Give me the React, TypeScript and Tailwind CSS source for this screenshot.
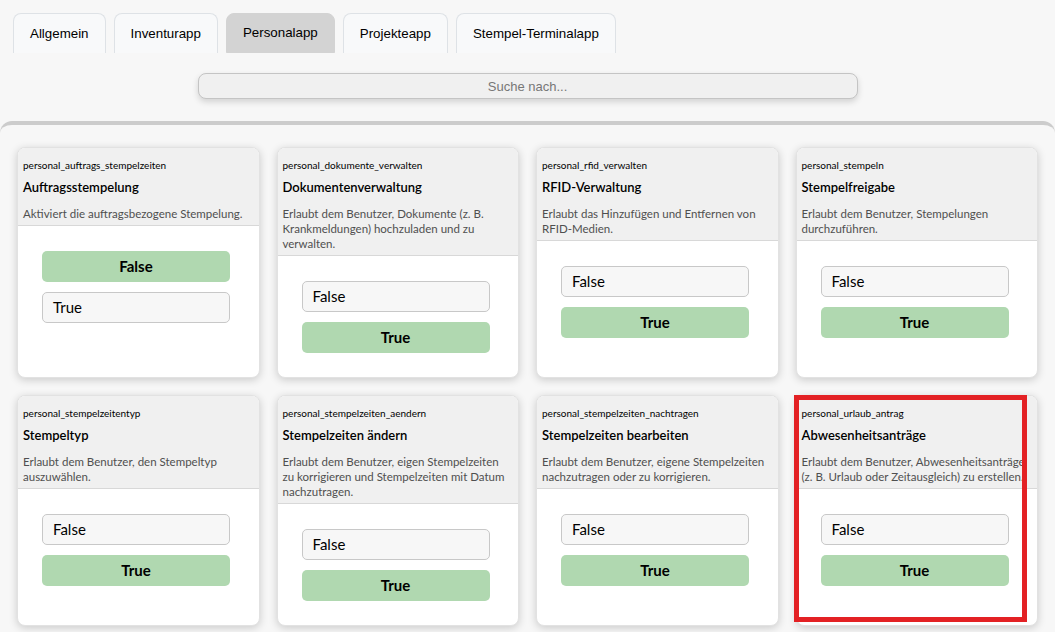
import React from 'react';

type Perm = {
  code: string;
  title: string;
  desc: string;
  value: boolean;
  marked?: boolean;
};

const tabs = ['Allgemein', 'Inventurapp', 'Personalapp', 'Projekteapp', 'Stempel-Terminalapp'];

const perms: Perm[] = [
  {
    code: 'personal_auftrags_stempelzeiten',
    title: 'Auftragsstempelung',
    desc: 'Aktiviert die auftragsbezogene Stempelung.',
    value: false,
  },
  {
    code: 'personal_dokumente_verwalten',
    title: 'Dokumentenverwaltung',
    desc: 'Erlaubt dem Benutzer, Dokumente (z. B. Krankmeldungen) hochzuladen und zu verwalten.',
    value: true,
  },
  {
    code: 'personal_rfid_verwalten',
    title: 'RFID-Verwaltung',
    desc: 'Erlaubt das Hinzufügen und Entfernen von RFID-Medien.',
    value: true,
  },
  {
    code: 'personal_stempeln',
    title: 'Stempelfreigabe',
    desc: 'Erlaubt dem Benutzer, Stempelungen durchzuführen.',
    value: true,
  },
  {
    code: 'personal_stempelzeitentyp',
    title: 'Stempeltyp',
    desc: 'Erlaubt dem Benutzer, den Stempeltyp auszuwählen.',
    value: true,
  },
  {
    code: 'personal_stempelzeiten_aendern',
    title: 'Stempelzeiten ändern',
    desc: 'Erlaubt dem Benutzer, eigen Stempelzeiten zu korrigieren und Stempelzeiten mit Datum nachzutragen.',
    value: true,
  },
  {
    code: 'personal_stempelzeiten_nachtragen',
    title: 'Stempelzeiten bearbeiten',
    desc: 'Erlaubt dem Benutzer, eigene Stempelzeiten nachzutragen oder zu korrigieren.',
    value: true,
  },
  {
    code: 'personal_urlaub_antrag',
    title: 'Abwesenheitsanträge',
    desc: 'Erlaubt dem Benutzer, Abwesenheitsanträge (z. B. Urlaub oder Zeitausgleich) zu erstellen.',
    value: true,
    marked: true,
  },
];

function OptionButton({ label, active }: { label: string; active: boolean }) {
  if (active) {
    return (
      <button className="h-[31px] w-[188px] rounded-[5px] bg-[#b0d8b0] text-center text-[15px] font-bold text-black">
        {label}
      </button>
    );
  }
  return (
    <button className="h-[31px] w-[188px] rounded-[5px] border border-[#c8c8c8] bg-[#f7f7f7] pl-[10px] text-left text-[15px] text-black">
      {label}
    </button>
  );
}

function PermCard({ perm }: { perm: Perm }) {
  return (
    <div className="relative">
      <div className="flex h-full flex-col overflow-hidden rounded-lg border border-[#e2e2e2] bg-white shadow-[0_2px_8px_rgba(0,0,0,0.18)]">
        <div className="border-b border-[#d8d8d8] bg-[#f0f0f0] px-[5px] pt-[10px] pb-[4px]">
          <div className="text-[10px] leading-[14px] text-black">{perm.code}</div>
          <div className="mt-[5px] text-[13px] font-semibold leading-[20px] text-black">{perm.title}</div>
          <div className="mt-[9px] text-[11.5px] leading-[15px] text-[#4f4f4f]">{perm.desc}</div>
        </div>
        <div className="flex flex-col gap-[10px] pt-[25px] pb-[24px] pl-[24px]">
          {['False', 'True'].map((o) => (
            <OptionButton key={o} label={o} active={(o === 'True') === perm.value} />
          ))}
        </div>
      </div>
      {perm.marked && (
        <div className="pointer-events-none absolute top-0 left-[-2px] h-[227px] w-[233px] border-[5px] border-[#e32124]" />
      )}
    </div>
  );
}

export default function App() {
  return (
    <div className="min-h-screen w-full bg-[#f7f7f7] font-['Liberation_Sans',Arial,sans-serif]">
      <nav className="flex gap-2 pt-[13px] pl-[13px]">
        {tabs.map((t) => (
          <div
            key={t}
            className={
              t === 'Personalapp'
                ? 'flex h-10 items-center rounded-t-lg border border-[#d3d3d3] bg-[#d3d3d3] px-4 text-[13.33px] text-black'
                : 'flex h-10 items-center rounded-t-lg border border-b-0 border-[#dee2e6] bg-[#f8f9fa] px-4 text-[13.33px] text-black'
            }
          >
            {t}
          </div>
        ))}
      </nav>

      <div className="mt-5 flex justify-center">
        <input
          placeholder="Suche nach..."
          className="h-[26px] w-[660px] rounded-lg border border-[#c4c4c4] bg-[#f0f0f0] text-center text-[13px] text-[#333] shadow-[0_3px_6px_rgba(0,0,0,0.15)] outline-none placeholder:text-[#777777]"
        />
      </div>

      <main className="mt-[22px] rounded-t-[12px] border-t-4 border-[#cccccc] px-[17px] pt-[22px] pb-6 font-['Lato',sans-serif]">
        <div className="grid grid-cols-4 gap-[17px]">
          {perms.map((p) => (
            <PermCard key={p.code} perm={p} />
          ))}
        </div>
      </main>
    </div>
  );
}
